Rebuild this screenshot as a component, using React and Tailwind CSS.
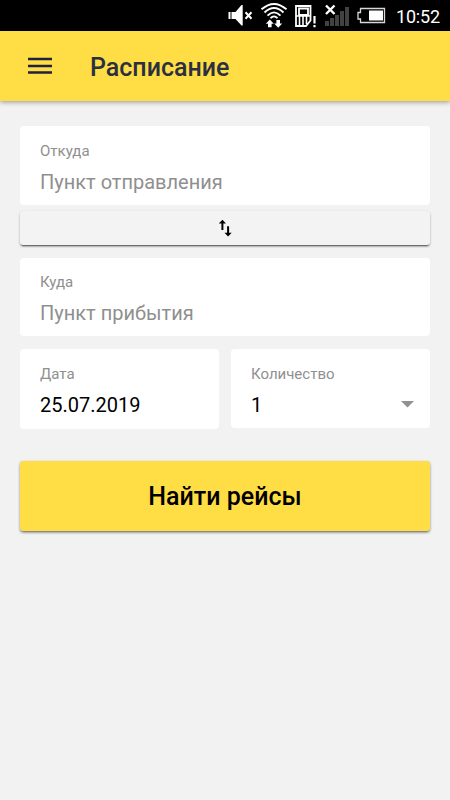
function StatusBar() {
  return (
    <div className="flex h-[31px] items-start bg-black pl-[227px] text-white">
      <svg className="mr-[7px] h-[31px] w-[26px]" viewBox="227 0 26 31" fill="currentColor" aria-hidden="true">
        <path d="M228.500 12h2v7h-2zM231.500 12h4l6-7h1.200v20.500h-1.200l-6-6.500h-4z" />
        <path d="M245.500 12.300l6 6.400M251.500 12.300l-6 6.400" stroke="currentColor" strokeWidth="2" />
      </svg>
      <svg className="mr-[6px] h-[31px] w-[28px]" viewBox="260 0 28 31" fill="none" stroke="currentColor" strokeWidth="1.900" aria-hidden="true">
        <path d="M261.500 9.300Q274-1.500 286.500 9.300M264.500 12.500Q274 3.700 283.500 12.500M267.500 15.700Q274 9 280.500 15.700M270.500 18.200Q274 14.500 277.500 18.200" />
        <path d="M269.800 19.500l4 4.200H271.600v3.600h-3.600v-3.600h-2.200zM278.200 27.700l-4-4.200h2.200v-3.600h3.600v3.600h2.200z" fill="currentColor" stroke="none" />
      </svg>
      <svg className="mr-[6px] h-[31px] w-[24px]" viewBox="294 0 24 31" fill="none" stroke="currentColor" strokeWidth="2" aria-hidden="true">
        <path d="M296 6h14.500v14.500l-4.500 5.500h-10zM299 8.500h9v6.500h-9z" strokeWidth="1.800" />
        <path d="M296 16h14M299.500 16v9M303 16v9M306.500 16v8" strokeWidth="1.600" />
        <path d="M314.500 16v7.500M314.500 25v2.300" strokeWidth="2.200" />
      </svg>
      <svg className="mr-[7px] h-[31px] w-[26px]" viewBox="324 0 26 31" aria-hidden="true">
        <path d="M325 21h4v5h-4zM330 18h4v8h-4zM335 15h4v11h-4zM340 11h4v15h-4zM345 7h4v19h-4z" fill="#424242" />
        <path d="M326 5.500l8.500 8.500M334.500 5.500l-8.500 8.500" stroke="currentColor" strokeWidth="2.400" />
      </svg>
      <svg className="h-[31px] w-[29px]" viewBox="357 0 29 31" aria-hidden="true">
        <path d="M360.500 8.500H384.500V22.500H360.500V19H358V12.500H360.500Z" fill="none" stroke="#d8d8d8" strokeWidth="1.300" />
        <path d="M369 10.500h14v10h-14z" fill="#fff" />
      </svg>
      <time className="ml-[10px] text-[18px] leading-[33px] tracking-[-0.2px]">10:52</time>
    </div>
  );
}

function Field({ label, children, className = "h-[79px] pt-[14px]" }) {
  return (
    <div className={`rounded-[4px] bg-white px-5 ${className}`}>
      <div className="text-[15px] leading-[22px] text-[#8f8f8f]">{label}</div>
      <div className="mt-[7px] flex items-center justify-between text-[20px] leading-[26px]">{children}</div>
    </div>
  );
}

export default function App() {
  return (
    <div className="h-[800px] w-[450px] overflow-hidden bg-[#f2f2f2] font-['Roboto',sans-serif]">
      <StatusBar />
      <header className="flex h-[70px] items-center bg-[#ffdd45] pl-7 text-[#2a3040] shadow-[0_1px_5px_rgba(0,0,0,0.4)]">
        <button className="h-6 w-6" aria-label="Меню">
          <svg className="h-6 w-6" viewBox="28 54 24 24" aria-hidden="true">
            <path d="M28 59h24M28 66h24M28 72.500h24" stroke="#20213d" strokeWidth="2.400" />
          </svg>
        </button>
        <h1 className="ml-[38px] pt-[3px] text-[25px] leading-8 font-medium">Расписание</h1>
      </header>
      <main className="px-5 pt-[25px]">
        <Field label="Откуда">
          <span className="text-[#8f8f8f]">Пункт отправления</span>
        </Field>
        <button className="mt-[6px] flex h-[34px] w-full items-center justify-center rounded-[3px] bg-[#f3f3f3] shadow-[0_2px_2px_-1px_rgba(0,0,0,0.65),0_1px_3px_rgba(0,0,0,0.2)]" aria-label="Поменять местами">
          <svg className="h-[18px] w-[14px]" viewBox="218 219 14 18" aria-hidden="true">
            <path d="M222.400 219.800l3.600 3.700h-2.600v6.500h-2v-6.500h-2.600zM228.100 236.500l-3.600-3.700h2.600v-6.500h2v6.500h2.600z" />
          </svg>
        </button>
        <Field label="Куда" className="mt-[12.500px] h-[78.500px] pt-[13.500px]">
          <span className="text-[#8f8f8f]">Пункт прибытия</span>
        </Field>
        <div className="mt-[13px] flex items-start gap-3">
          <Field label="Дата" className="h-[80px] w-[199px] pt-[13.500px]">
            <span className="text-black">25.07.2019</span>
          </Field>
          <Field label="Количество" className="h-[78.500px] w-[199px] pt-[13.500px]">
            <span className="text-black">1</span>
            <svg className="mr-[-4px] h-[7px] w-[13px]" viewBox="0 0 13 7" aria-hidden="true">
              <path d="M0 0h13L6.500 6.500z" fill="#929292" />
            </svg>
          </Field>
        </div>
        <button className="mt-[32px] h-[70px] w-full rounded-[3px] bg-[#ffdd45] pt-[2px] text-[25px] font-medium text-black shadow-[0_2px_3px_-1px_rgba(0,0,0,0.5),0_1px_3px_rgba(0,0,0,0.25)]">
          Найти рейсы
        </button>
      </main>
    </div>
  );
}
